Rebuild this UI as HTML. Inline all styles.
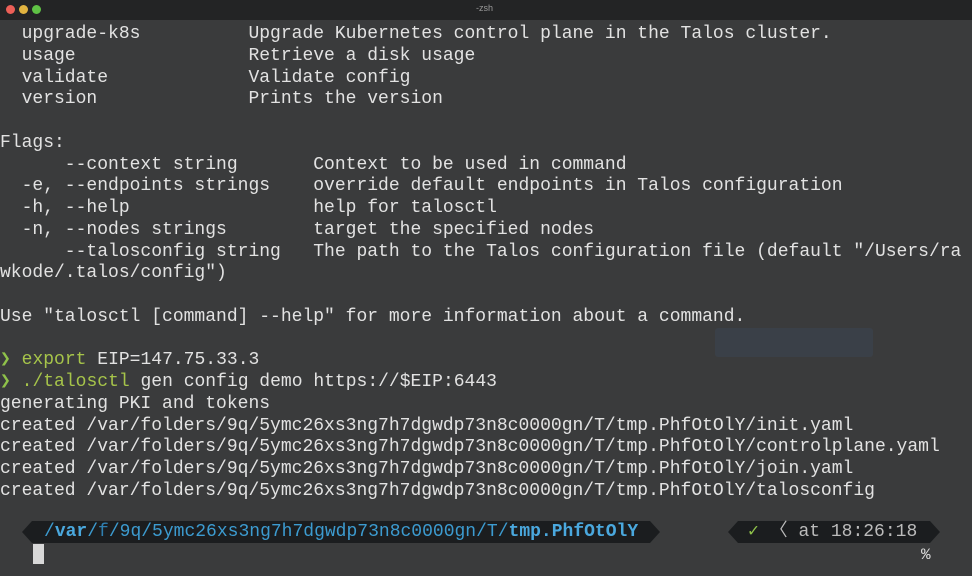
<!DOCTYPE html>
<html><head><meta charset="utf-8"><style>
html,body{margin:0;padding:0;width:972px;height:576px;overflow:hidden;background:#3a3b3c;}
.tb{position:absolute;left:0;top:0;width:972px;height:20px;background:#232425;}
.dot{position:absolute;top:5px;width:9px;height:9px;border-radius:50%;}
.tt{position:absolute;top:3px;left:476px;font:9px "Liberation Sans",sans-serif;color:#999;}
pre{position:absolute;left:0;top:24px;margin:0;font-family:"Liberation Mono","DejaVu Sans Mono",monospace;font-size:18px;line-height:21.75px;color:#e2e2e2;white-space:pre;}
.g{color:#a6c44a}.a{color:#8fc24a}
.ptxt{position:absolute;top:520px;font-family:"Liberation Mono",monospace;font-size:18px;line-height:24px;white-space:pre;}
</style></head><body>
<div style="position:absolute;left:715px;top:328px;width:158px;height:29px;background:#3c4656;border-radius:3px;opacity:.45"></div>
<div class="tb"><div class="dot" style="left:6px;background:#ec5f57"></div><div class="dot" style="left:19px;background:#e1b340"></div><div class="dot" style="left:32px;background:#5fc245"></div><div class="tt">-zsh</div></div>
<pre>  upgrade-k8s          Upgrade Kubernetes control plane in the Talos cluster.
  usage                Retrieve a disk usage
  validate             Validate config
  version              Prints the version

Flags:
      --context string       Context to be used in command
  -e, --endpoints strings    override default endpoints in Talos configuration
  -h, --help                 help for talosctl
  -n, --nodes strings        target the specified nodes
      --talosconfig string   The path to the Talos configuration file (default "/Users/ra
wkode/.talos/config")

Use "talosctl [command] --help" for more information about a command.

<span class="a">❯</span> <span class="g">export</span> EIP=147.75.33.3
<span class="a">❯</span> <span class="g">./talosctl</span> gen config demo https://$EIP:6443
generating PKI and tokens
created /var/folders/9q/5ymc26xs3ng7h7dgwdp73n8c0000gn/T/tmp.PhfOtOlY/init.yaml
created /var/folders/9q/5ymc26xs3ng7h7dgwdp73n8c0000gn/T/tmp.PhfOtOlY/controlplane.yaml
created /var/folders/9q/5ymc26xs3ng7h7dgwdp73n8c0000gn/T/tmp.PhfOtOlY/join.yaml
created /var/folders/9q/5ymc26xs3ng7h7dgwdp73n8c0000gn/T/tmp.PhfOtOlY/talosconfig
</pre>
<svg style="position:absolute;left:0;top:0" width="972" height="576">
<polygon points="22,532 32,521 650,521 660,532 650,543 32,543" fill="#1b1d1f"/>
<polygon points="728,532 738,521 930,521 940,532 930,543 738,543" fill="#1b1d1f"/>
</svg>
<div class="ptxt" style="left:44px;color:#3c9bd0">/<b style="color:#4aa8de">var</b>/<span style="color:#2f7fb0">f</span>/9q/5ymc26xs3ng7h7dgwdp73n8c0000gn/T/<b style="color:#4aa8de">tmp.PhfOtOlY</b></div>
<div class="ptxt" style="left:748px;color:#bbb"><span style="color:#8fc24a">✓</span> 〈 at 18:26:18</div>
<div style="position:absolute;left:33px;top:544px;width:11px;height:20px;background:#d8d8d8"></div>
<div class="ptxt" style="left:921px;top:543px;color:#ddd;font-size:16px">%</div>
</body></html>
